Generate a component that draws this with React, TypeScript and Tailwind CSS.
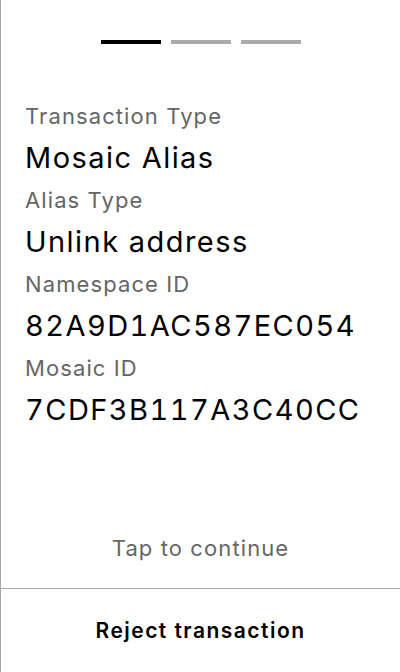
import React from 'react';

const fields = [
  { label: 'Transaction Type', value: 'Mosaic Alias' },
  { label: 'Alias Type', value: 'Unlink address' },
  { label: 'Namespace ID', value: '82A9D1AC587EC054' },
  { label: 'Mosaic ID', value: '7CDF3B117A3C40CC' },
];

function Steps({ active }: { active: number }) {
  return (
    <div className="flex justify-center gap-[10px] pt-10">
      {[0, 1, 2].map((i) => (
        <span key={i} className={i === active ? 'h-1 w-[60px] bg-black' : 'h-1 w-[60px] bg-[#aaaaaa]'} />
      ))}
    </div>
  );
}

export default function App() {
  return (
    <div
      className="flex h-[672px] w-[400px] flex-col border-l border-[#a8a8a8] bg-white text-black"
      style={{ fontFamily: 'Inter, "Noto Sans", sans-serif' }}
    >
      <Steps active={0} />
      <div className="flex flex-1 cursor-pointer flex-col">
        <dl className="mt-[54px] flex flex-col px-6">
          {fields.map((f) => (
            <div key={f.label} className="flex flex-col">
              <dt className="text-[22px] leading-[36px] tracking-[0.05em] text-[#666666]">{f.label}</dt>
              <dd className="text-[29px] leading-[48px] tracking-[0.05em] tabular-nums">{f.value}</dd>
            </div>
          ))}
        </dl>
        <div className="flex-1" />
        <p className="pb-6 text-center text-[22px] leading-[32px] tracking-[0.05em] text-[#666666]">
          Tap to continue
        </p>
      </div>
      <button className="h-[84px] border-t border-[#a8a8a8] text-center text-[21px] font-semibold tracking-[0.07em]">
        Reject transaction
      </button>
    </div>
  );
}
